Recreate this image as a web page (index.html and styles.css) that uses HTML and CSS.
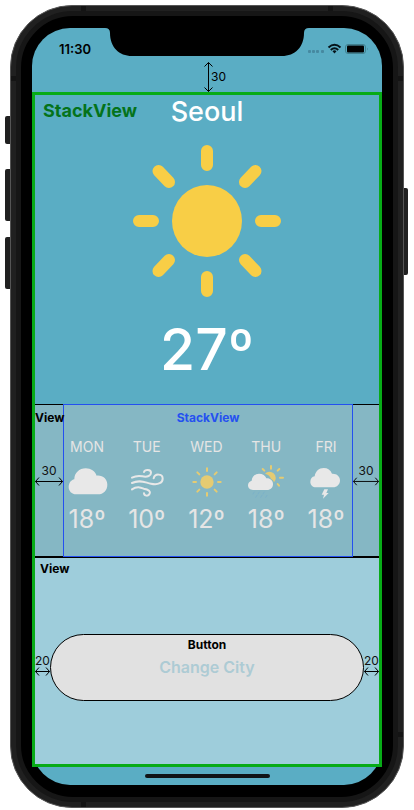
FILE: index.html
```html
<!DOCTYPE html>
<html lang="en">
<head>
<meta charset="utf-8">
<meta name="viewport" content="width=device-width, initial-scale=1">
<title>Weather</title>
<link rel="stylesheet" href="styles.css">
</head>
<body>
<div class="phone">
  <span class="key key-mute"></span>
  <span class="key key-up"></span>
  <span class="key key-down"></span>
  <span class="key key-power"></span>
  <span class="band band-top-left"></span>
  <span class="band band-top-right"></span>
  <span class="band band-left"></span>
  <span class="band band-right"></span>
  <span class="band band-bottom-left"></span>
  <span class="band band-low-right"></span>
  <div class="bezel">
    <div class="screen">
      <svg class="notch" viewBox="0 0 204 28" aria-hidden="true"><path d="M0 0Q5 0 5 5C5 19 14 28 27 28H177C190 28 199 19 199 5Q199 0 204 0Z"/></svg>
      <header class="status">
        <span class="time">11:30</span>
        <svg class="indicators" viewBox="0 0 60 12" aria-hidden="true">
          <g fill="#4689a0"><rect y="7" width="3" height="3" rx="1"/><rect x="4" y="7" width="3" height="3" rx="1"/><rect x="8" y="7" width="3" height="3" rx="1"/><rect x="13" y="7" width="3" height="3" rx="1"/></g>
          <g fill="none" stroke="#06141a" stroke-width="2"><path d="M20.5 4.6Q26.500 -1 32.500 4.600"/><path d="M22.800 7Q26.500 3.600 30.200 7"/></g>
          <path d="M24.500 8.200Q26.500 6.500 28.500 8.200L26.500 10.500Z" fill="#06141a"/>
          <rect x="37.500" y="1.500" width="20" height="9" rx="2.500" fill="none" stroke="#40808f"/>
          <rect x="39" y="2.500" width="17" height="7" rx="1" fill="#000"/>
          <path d="M59 4.500Q60.500 6 59 7.500Z" fill="#40808f"/>
        </svg>
        <div class="drop">
          <svg viewBox="2 0 5 30" aria-hidden="true"><path d="M4.500 .5V29.500M.5 4.500L4.500 .5L8.500 4.500M.5 25.500L4.500 29.500L8.500 25.500"/></svg>
          <span>30</span>
        </div>
      </header>

      <main class="stack">
        <section class="current">
          <span class="stack-tag">StackView</span>
          <h1>Seoul</h1>
          <svg class="sun" viewBox="0 0 148 154" aria-label="Sunny">
            <ellipse cx="74" cy="77" rx="35" ry="36"/>
            <path d="M74 7V21M74 133V147M6 77H20M128 77H142M25.500 27L36 38M122.500 27L112 38M25.500 127L36 116M122.500 127L112 116"/>
          </svg>
          <p class="now">27º</p>
        </section>

        <section class="week">
          <div class="side side-left">
            <b class="tag">View</b>
            <div class="span"><span>30</span><svg viewBox="0 0 28 8" aria-hidden="true"><path d="M.5 4.500H27.500M4 .5L.5 4.500L4 8.500M24 .5L27.500 4.500L24 8.500"/></svg></div>
          </div>
          <div class="forecast">
            <b class="tag">StackView</b>
            <ul class="days">
              <li><span class="day">MON</span>
                <svg viewBox="0 0 120 108" aria-label="Cloudy"><path d="M28 91C14 91 5 81 5 69C5 57 12 48 22 46C22 27 37 13 56 13C72 13 84 22 89 35C107 33 121 45 121 62C121 79 109 91 93 91Z"/></svg>
                <span class="temp">18º</span></li>
              <li><span class="day">TUE</span>
                <svg viewBox="0 0 120 108" aria-label="Windy"><g class="line"><path d="M15 41Q29 34 46 37C62 40 72 35 72 26C72 16 54 15 51 24"/><path d="M15 57C38 45 55 56 72 59C95 64 107 55 107 44C107 28 83 28 80 43"/><path d="M15 76C30 66 40 70 50 74C66 76 71 84 68 89C64 98 52 96 51 88"/></g></svg>
                <span class="temp">10º</span></li>
              <li><span class="day">WED</span>
                <svg viewBox="0 0 120 108" aria-label="Sunny"><g class="gold"><circle cx="60" cy="54" r="20"/><path d="M60 13V21M60 87V95M19 54H27M93 54H101M31 25L37 31M89 25L83 31M31 83L37 77M89 83L83 77"/></g></svg>
                <span class="temp">12º</span></li>
              <li><span class="day">THU</span>
                <svg viewBox="0 0 120 108" aria-label="Sun and rain"><g class="gold"><path d="M57 29A18 18 0 1 1 84 55C82 49 80 47 75 45C72 36 66 31 57 29Z" stroke="none"/><path d="M75 6V14M50 15L55 20M100 15L95 20M102 41H111M95 60L99 65"/></g><path d="M21 78C12 78 6 72 6 64C6 57 10 52 17 50C18 38 27 29 39 29C50 29 58 34 61 43C72 42 81 50 81 60C81 71 74 78 63 78Z"/><path class="rain" d="M25 84L21 90M40 84L36 90M55 84L51 90M33 94L29 100M48 94L44 100M63 94L59 100"/></svg>
                <span class="temp">18º</span></li>
              <li><span class="day">FRI</span>
                <svg viewBox="0 0 120 108" aria-label="Thunderstorm"><path d="M30 70C20 70 13 63 13 54C13 45 18 38 26 37C28 22 39 12 53 12C65 12 74 18 78 29C92 28 102 37 102 49C102 62 93 70 81 70Z"/><path d="M55 76H66L61 87H68L51 104L54 92H47Z"/></svg>
                <span class="temp">18º</span></li>
            </ul>
          </div>
          <div class="side">
            <div class="span"><span>30</span><svg viewBox="0 0 28 8" aria-hidden="true"><path d="M.5 4.500H27.500M4 .5L.5 4.500L4 8.500M24 .5L27.500 4.500L24 8.500"/></svg></div>
          </div>
        </section>

        <section class="action">
          <b class="tag">View</b>
          <div class="row">
            <div class="span"><span>20</span><svg viewBox="0 0 15 8" aria-hidden="true"><path d="M.5 4.500H14.500M4 .5L.5 4.500L4 8.500M11 .5L14.500 4.500L11 8.500"/></svg></div>
            <button type="button"><b class="tag">Button</b><span class="change">Change City</span></button>
            <div class="span"><span>20</span><svg viewBox="0 0 15 8" aria-hidden="true"><path d="M.5 4.500H14.500M4 .5L.5 4.500L4 8.500M11 .5L14.500 4.500L11 8.500"/></svg></div>
          </div>
        </section>
      </main>
      <footer class="home"><span></span></footer>
    </div>
  </div>
</div>
</body>
</html>
```
FILE: styles.css
```css
* { box-sizing: border-box; margin: 0; padding: 0; }
body {
  background: #fff;
  color: #000;
  font-family: Inter, "Liberation Sans", sans-serif;
  padding: 5px 10px 2px;
}
svg { display: block; overflow: visible; }

/* Device shell */
.phone {
  position: relative;
  padding: 5px;
  border: 1px solid #555;
  border-radius: 62px;
  background: #202020;
}
.bezel {
  border: 5px solid #161616;
  border-radius: 57px;
  background: #000;
  padding: 12px 11px;
}
.key {
  position: absolute;
  z-index: -1;
  width: 8px;
  left: -6px;
  border-radius: 2px;
  background: #202020;
}
.key-mute { top: 110px; height: 28px; }
.key-up { top: 163px; height: 52px; }
.key-down { top: 231px; height: 52px; }
.key-power { left: auto; right: -5px; top: 182px; height: 87px; }
.band { position: absolute; width: 5px; height: 5px; background: #141414; }
.band-top-left { top: 0; left: 70px; }
.band-top-right { top: 0; right: 70px; }
.band-left { top: 70px; left: 0; }
.band-right { top: 70px; right: 0; }
.band-bottom-left { bottom: 0; left: 70px; }
.band-low-right { bottom: 70px; right: 0; }

.screen {
  position: relative;
  border-radius: 38px;
  background: #5aadc4;
}
.notch {
  position: absolute;
  top: 0;
  left: 50%;
  width: 204px;
  margin-left: -102px;
}

/* Status bar */
.status {
  height: 64px;
  display: grid;
  grid-template-columns: 1fr 1fr;
  grid-template-rows: 34px 30px;
  padding: 0 14px 0 27px;
}
.time { font-size: 13px; line-height: 16px; font-weight: 600; align-self: end; padding-bottom: 5px; }
.indicators { width: 60px; height: 12px; align-self: end; justify-self: end; margin-bottom: 7px; }
.drop {
  grid-column: 1 / 3;
  display: flex;
  align-items: center;
  padding-left: 147px;
  font-size: 12px;
  line-height: 16px;
}
.drop svg { width: 5px; height: 30px; }
.drop path, .span path { fill: none; stroke: #000; stroke-width: 1; }

/* Outer stack */
.stack { border: 3px solid #07ab17; }
.current {
  position: relative;
  display: flex;
  flex-direction: column;
  align-items: center;
  height: 309px;
  color: #fff;
}
.stack-tag {
  position: absolute;
  top: 4px;
  left: 8px;
  color: #04731a;
  font-size: 18px;
  line-height: 24px;
  font-weight: 700;
}
h1 { font-size: 27px; line-height: 34px; font-weight: 500; }
.sun { width: 148px; height: 154px; margin-top: 15px; fill: #f8ce46; }
.sun path { stroke: #f8ce46; stroke-width: 12; stroke-linecap: round; }
.now { font-size: 57px; line-height: 72px; font-weight: 500; margin-top: 16px; }

.tag { font-size: 12px; line-height: 16px; font-weight: 700; }

/* Weekly forecast */
.week {
  display: flex;
  border-top: 1px solid #000;
  border-bottom: 2px solid #000;
  background: #85b7c4;
}
.side {
  flex: 0 0 26px;
  display: flex;
  flex-direction: column;
  justify-content: center;
  padding-bottom: 12px;
}
.side-left { flex-basis: 28px; position: relative; }
.side-left .tag { position: absolute; top: 5px; left: 0; }
.span { display: flex; flex-direction: column; align-items: center; font-size: 12px; line-height: 12px; color: #111; }
.week .span svg { width: 100%; height: 8px; }
.forecast {
  flex: 1;
  border: 1px solid #2450f0;
  margin: -1px 0;
  padding: 5px 0 21px;
  text-align: center;
}
.forecast .tag { display: block; color: #2450f0; }
.days {
  list-style: none;
  display: grid;
  grid-template-columns: repeat(5, 40px);
  justify-content: space-between;
  margin-top: 12px;
  padding: 0 6px 0 3px;
  color: #e5e5e5;
}
.days li { display: flex; flex-direction: column; align-items: center; }
.days svg { width: 40px; height: 36px; margin-top: 8px; fill: #e8e8e8; }
.day { font-size: 14px; line-height: 18px; }
.temp { font-size: 25px; line-height: 31px; margin-top: 4px; white-space: nowrap; }
.line { fill: none; stroke: #e8e8e8; stroke-width: 6; stroke-linecap: round; }
.gold { fill: #e5cb72; stroke: #e5cb72; stroke-width: 6; stroke-linecap: round; }
.gold circle { stroke: none; }
.rain { stroke: #7bb1c9; stroke-width: 3; stroke-linecap: round; }

/* City button */
.action { background: #9ecddb; padding-bottom: 63px; }
.action > .tag { display: block; padding: 3px 5px 0; }
.row { display: flex; align-items: center; margin-top: 57px; }
.row .span { flex: 0 0 15px; padding-bottom: 6px; }
.row .span svg { width: 15px; height: 8px; }
button {
  flex: 1;
  display: flex;
  flex-direction: column;
  align-items: center;
  gap: 3px;
  height: 67px;
  padding-top: 2px;
  border: 1px solid #000;
  border-radius: 34px;
  background: #e1e1e1;
  font-family: inherit;
  color: #000;
}
.change { font-size: 16px; line-height: 22px; font-weight: 600; color: #adcbd4; }

.home { height: 18px; display: flex; justify-content: center; align-items: center; }
.home span { width: 125px; height: 4px; border-radius: 2px; background: #101417; }
```
